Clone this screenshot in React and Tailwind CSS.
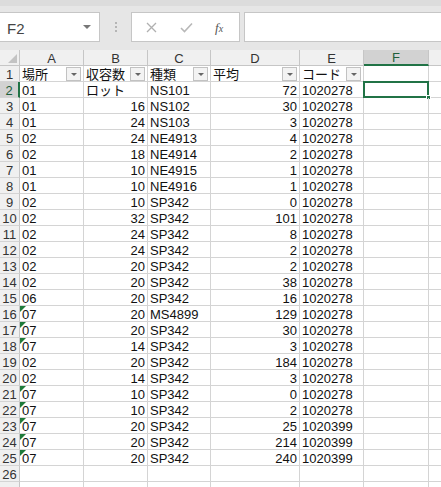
import { useState } from 'react';

const rows = [
  ['01', 'ロット', 'NS101', '72', '1020278', false],
  ['01', '16', 'NS102', '30', '1020278', false],
  ['01', '24', 'NS103', '3', '1020278', false],
  ['02', '24', 'NE4913', '4', '1020278', false],
  ['02', '18', 'NE4914', '2', '1020278', false],
  ['01', '10', 'NE4915', '1', '1020278', false],
  ['01', '10', 'NE4916', '1', '1020278', false],
  ['02', '10', 'SP342', '0', '1020278', false],
  ['02', '32', 'SP342', '101', '1020278', false],
  ['02', '24', 'SP342', '8', '1020278', false],
  ['02', '24', 'SP342', '2', '1020278', false],
  ['02', '20', 'SP342', '2', '1020278', false],
  ['02', '20', 'SP342', '38', '1020278', false],
  ['06', '20', 'SP342', '16', '1020278', false],
  ['07', '20', 'MS4899', '129', '1020278', true],
  ['07', '20', 'SP342', '30', '1020278', true],
  ['07', '14', 'SP342', '3', '1020278', true],
  ['02', '20', 'SP342', '184', '1020278', false],
  ['02', '14', 'SP342', '3', '1020278', false],
  ['07', '10', 'SP342', '0', '1020278', true],
  ['07', '10', 'SP342', '2', '1020278', true],
  ['07', '20', 'SP342', '25', '1020399', true],
  ['07', '20', 'SP342', '214', '1020399', true],
  ['07', '20', 'SP342', '240', '1020399', true],
];

const headers = ['場所', '収容数', '種類', '平均', 'コード'];
const letters = ['A', 'B', 'C', 'D', 'E', 'F'];
const widths = ['w-[64px]', 'w-[64px]', 'w-[63px]', 'w-[89px]', 'w-[64px]', 'w-[65px]'];

const FilterButton = () => (
  <div className="absolute right-[2px] top-[1px] w-[15px] h-[14px] border border-[#c2c2c2] bg-[#f3f3f3] flex items-center justify-center">
    <div className="w-0 h-0 border-l-[3px] border-r-[3px] border-t-[3px] border-l-transparent border-r-transparent border-t-[#666]" />
  </div>
);

const RowHeader = ({ n, active }) => (
  <div
    className={`w-[20px] shrink-0 h-full flex items-center justify-center pt-[1px] border-b border-[#d4d4d4] ${
      active ? 'bg-[#d2d2d2] border-r-2 border-r-[#217346] text-[#1e5e3a]' : 'bg-[#f0f0f0] border-r border-r-[#c6c6c6] text-[#333]'
    }`}
  >
    {n}
  </div>
);

const Cell = ({ w, children, right, tri }) => (
  <div
    className={`${w} shrink-0 h-full relative border-r border-b border-[#d4d4d4] px-[2px] pt-[1px] flex items-center overflow-hidden whitespace-nowrap ${
      right ? 'justify-end' : ''
    }`}
  >
    {tri && (
      <div className="absolute left-0 top-0 w-0 h-0 border-t-[6px] border-r-[6px] border-t-[#1e7b3a] border-r-transparent" />
    )}
    {children}
  </div>
);

export default function App() {
  const [cell] = useState('F2');

  return (
    <div className="w-[441px] h-[487px] overflow-hidden bg-white text-[13px] text-[#111] font-['Liberation_Sans','Noto_Sans_CJK_JP',sans-serif] leading-none">
      {/* Formula bar */}
      <div className="h-[50px] bg-[#e6e6e6] border-t-[6px] border-[#dcdcdc] flex items-center pb-[2px]">
        <div className="w-[100px] h-[30px] bg-white border border-[#c6c6c6] border-l-0 flex items-center justify-between pl-[7px] pr-[8px] text-[#444] text-[15px]">
          <span className="pt-[2px]">{cell}</span>
          <div className="w-0 h-0 border-l-[4px] border-r-[4px] border-t-[4px] border-l-transparent border-r-transparent border-t-[#777]" />
        </div>
        <div className="w-[31px] flex flex-col items-center justify-center gap-[2px]">
          <div className="w-[2px] h-[2px] bg-[#b5b5b5]" />
          <div className="w-[2px] h-[2px] bg-[#b5b5b5]" />
          <div className="w-[2px] h-[2px] bg-[#b5b5b5]" />
        </div>
        <div className="w-[109px] h-[30px] bg-white border border-[#c6c6c6] flex items-center">
          <svg className="ml-[14px]" width="11" height="11" viewBox="0 0 11 11">
            <path d="M1 1L10 10M10 1L1 10" stroke="#b0b0b0" strokeWidth="1.3" />
          </svg>
          <svg className="ml-[23px]" width="13" height="11" viewBox="0 0 13 11">
            <path d="M1 6L4.5 9.5L12 1.5" stroke="#b8b8b8" strokeWidth="1.6" fill="none" />
          </svg>
          <span className="ml-[22px] italic text-[#555] text-[13px] font-['Liberation_Serif',serif]">
            f<span className="text-[10px]">x</span>
          </span>
        </div>
        <div className="ml-[4px] flex-1 h-[30px] bg-white border border-[#c6c6c6] border-r-0" />
      </div>

      {/* Column headers */}
      <div className="h-[16px] flex bg-[#f0f0f0] text-[#333]">
        <div className="w-[20px] shrink-0 h-full border-r border-b border-[#c6c6c6] relative">
          <svg className="absolute right-[2px] bottom-[2px]" width="9" height="9" viewBox="0 0 9 9">
            <path d="M9 0L9 9L0 9Z" fill="#c3c3c3" />
          </svg>
        </div>
        {letters.map((l, i) => (
          <div
            key={l}
            className={`${widths[i]} shrink-0 h-full flex items-center justify-center pt-[1px] border-r border-[#c6c6c6] ${
              l === 'F' ? 'bg-[#d2d2d2] border-b-2 border-b-[#217346] text-[#1e5e3a]' : 'border-b border-b-[#c6c6c6]'
            }`}
          >
            {l}
          </div>
        ))}
        <div className="flex-1 h-full border-b border-[#c6c6c6]" />
      </div>

      {/* Row 1: headers with filter */}
      <div className="h-[16px] flex">
        <RowHeader n={1} />
        {headers.map((h, i) => (
          <Cell key={h} w={widths[i]}>
            {h}
            <FilterButton />
          </Cell>
        ))}
        <Cell w={widths[5]} />
        <div className="flex-1 h-full border-b border-[#d4d4d4]" />
      </div>

      {/* Data rows */}
      {rows.map((r, idx) => {
        const n = idx + 2;
        const bIsText = isNaN(Number(r[1]));
        return (
          <div key={n} className="h-[16px] flex">
            <RowHeader n={n} active={n === 2} />
            <Cell w={widths[0]} tri={r[5]}>{r[0]}</Cell>
            <Cell w={widths[1]} right={!bIsText}>{r[1]}</Cell>
            <Cell w={widths[2]}>{r[2]}</Cell>
            <Cell w={widths[3]} right>{r[3]}</Cell>
            <Cell w={widths[4]}>{r[4]}</Cell>
            {n === 2 ? (
              <div className={`${widths[5]} shrink-0 h-full relative border-r border-b border-[#d4d4d4]`}>
                <div className="absolute left-[-1px] top-[-1px] right-[-1px] bottom-[-1px] border-2 border-[#217346]" />
                <div className="absolute right-[-3px] bottom-[-3px] w-[5px] h-[5px] bg-[#217346] border border-white" />
              </div>
            ) : (
              <Cell w={widths[5]} />
            )}
            <div className="flex-1 h-full border-b border-[#d4d4d4]" />
          </div>
        );
      })}

      {/* Row 26 */}
      <div className="h-[16px] flex">
        <RowHeader n={26} />
        {widths.map((w, i) => (
          <Cell key={i} w={w} />
        ))}
        <div className="flex-1 h-full border-b border-[#d4d4d4]" />
      </div>
      <div className="h-[8px] flex">
        <div className="w-[20px] shrink-0 bg-[#f0f0f0] border-r border-[#c6c6c6]" />
        {widths.map((w, i) => (
          <div key={i} className={`${w} shrink-0 border-r border-[#d4d4d4]`} />
        ))}
      </div>
    </div>
  );
}
